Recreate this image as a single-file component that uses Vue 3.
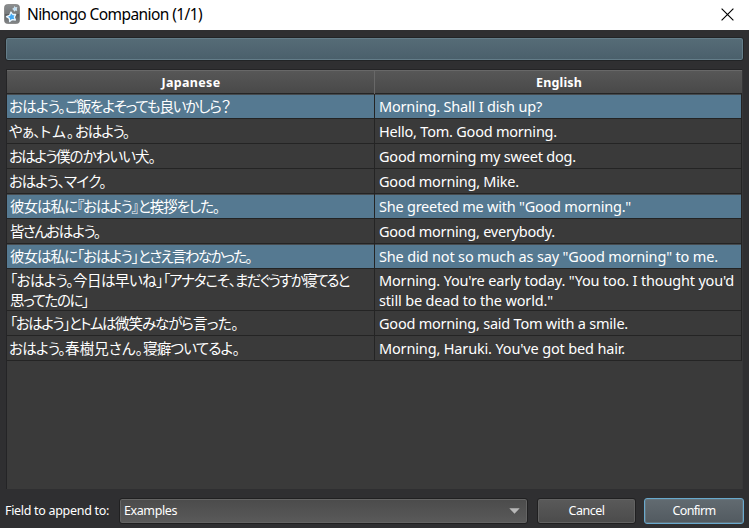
<script setup>
// Each line is a list of phrases with their widths.
const rows = [
  {
    picked: true,
    ja: [[['おはよう。', 56], ['ご飯をよそっても良いかしら？', 165]]],
    en: [['Morning. Shall I dish up?', 163]],
  },
  {
    ja: [[['やぁ、', 31], ['トム。', 35], ['おはよう。', 54]]],
    en: [['Hello, Tom. Good morning.', 178]],
  },
  {
    ja: [[['おはよう', 47], ['僕のかわいい犬。', 99]]],
    en: [['Good morning my sweet dog.', 197]],
  },
  {
    ja: [[['おはよう、', 55], ['マイク。', 42]]],
    en: [['Good morning, Mike.', 140]],
  },
  {
    picked: true,
    shift: true,
    ja: [[['彼女は私に', 67], ['『おはよう』', 61], ['と挨拶をした。', 81]]],
    en: [['She greeted me with "Good morning."', 252]],
  },
  {
    shift: true,
    ja: [[['皆さん', 36], ['おはよう。', 54]]],
    en: [['Good morning, everybody.', 176]],
  },
  {
    picked: true,
    shift: true,
    ja: [[['彼女は私に', 67], ['「おはよう」', 61], ['とさえ言わなかった。', 113]]],
    en: [['She did not so much as say "Good morning" to me.', 339]],
  },
  {
    tall: true,
    shift: true,
    ja: [
      [['「おはよう。', 63], ['今日は早いね」', 90], ['「アナタこそ、', 72], ['まだぐうすか', 68], ['寝てると', 45]],
      [['思ってたのに」', 78]],
    ],
    en: [['Morning. You\'re early today. "You too. I thought you\'d', 355], ['still be dead to the world."', 174]],
  },
  {
    shift: true,
    ja: [[['「おはよう」', 59], ['とトムは', 46], ['微笑みながら', 78], ['言った。', 45]]],
    en: [['Good morning, said Tom with a smile.', 249]],
  },
  {
    ja: [[['おはよう。', 56], ['春樹兄さん。', 78], ['寝癖ついてるよ。', 96]]],
    en: [["Morning, Haruki. You've got bed hair.", 246]],
  },
]

// Spreads the letters of a phrase so that it takes the given width.
const vFit = {
  mounted(el, { value }) {
    const n = [...el.textContent].length
    el.style.letterSpacing = (value - el.getBoundingClientRect().width) / n + 'px'
  },
}
</script>

<template>
  <div class="window">
    <header class="titlebar">
      <svg class="logo" width="16" height="20" viewBox="0 0 16 20">
        <defs>
          <linearGradient id="plate" x1="0" y1="0" x2="0" y2="1">
            <stop offset="0" stop-color="#8b8e90" />
            <stop offset=".48" stop-color="#777a7c" />
            <stop offset=".52" stop-color="#5b5e60" />
            <stop offset="1" stop-color="#85888a" />
          </linearGradient>
        </defs>
        <rect x=".5" y=".5" width="15" height="19" rx="3" fill="url(#plate)" stroke="#777" stroke-opacity=".7" />
        <path d="M7 8l1.7 2.5 3-.1-1.4 2.7 1.1 2.9-3.2-.4-2.5 2-.4-3.2L2.5 12.600l3.100-1.200z" fill="#43a9f4" stroke="#e9f6ff" stroke-width="1.300" stroke-linejoin="round" />
        <path d="M10.600 2.600l.9 1.100 1.500-.2-.7 1.500.6 1.400-1.500-.2-1.200 1-.3-1.500-1.300-.8 1.500-.7z" fill="#b9e2fb" stroke="#e9f6ff" stroke-width=".6" stroke-linejoin="round" />
      </svg>
      <span v-fit="175" class="title">Nihongo Companion (1/1)</span>
      <svg class="close" width="13" height="13" viewBox="0 0 13 13">
        <path d="M.6.6l11.8 11.8M12.4.6L.6 12.4" stroke="#000" stroke-width="1.15" fill="none" />
      </svg>
    </header>

    <main class="body">
      <input class="search" type="text" />
      <div class="table">
        <div class="head">
          <div><span v-fit="59">Japanese</span></div>
          <div><span v-fit="46">English</span></div>
        </div>
        <div v-for="(row, i) in rows" :key="i" class="row" :class="{ picked: row.picked, tall: row.tall }">
          <div class="cell ja" :class="{ shift: row.shift }">
            <div v-for="(line, j) in row.ja" :key="j" class="line"><span v-for="([text, width], k) in line" :key="k" v-fit="width">{{ text }}</span></div>
          </div>
          <div class="cell en">
            <div v-for="[text, width] in row.en" :key="text" class="line"><span v-fit="width">{{ text }}</span></div>
          </div>
        </div>
      </div>
      <footer class="footer">
        <div class="label"><span v-fit="104">Field to append to:</span></div>
        <div class="combo">
          <span v-fit="53">Examples</span>
          <svg width="11" height="6" viewBox="0 0 11 6"><path d="M.3.2h10.4L5.5 5.8z" fill="#b8b8b8" /></svg>
        </div>
        <button class="btn cancel"><span v-fit="36">Cancel</span></button>
        <button class="btn confirm"><span v-fit="43">Confirm</span></button>
      </footer>
    </main>
  </div>
</template>

<style>
body { margin: 0; background: #2f2f31; }
</style>

<style scoped>
.window {
  width: 749px;
  height: 528px;
  overflow: hidden;
  display: flex;
  flex-direction: column;
  background: #2f2f31;
  color: #fff;
  font-family: "Noto Sans", "Noto Sans CJK JP", sans-serif;
  box-sizing: border-box;
}
.window * { box-sizing: border-box; }
span { white-space: pre; }
.titlebar {
  flex: none;
  height: 30px;
  padding: 0 15px 2px 4px;
  display: flex;
  align-items: center;
  background: #fff;
  color: #000;
}
.title { margin-left: 7px; font-size: 15.5px; line-height: 20px; }
.close { margin-left: auto; }
.body {
  flex: 1;
  min-height: 0;
  padding: 7px 5px 3px;
  display: flex;
  flex-direction: column;
}
.search {
  flex: none;
  height: 24px;
  margin: 0;
  padding: 0 4px;
  border: 1px solid #222426;
  border-radius: 3px;
  outline: none;
  color: #fff;
  background: linear-gradient(#566c77, #4a5f6b);
  box-shadow: inset 0 0 0 1px #647d89;
}
.table {
  flex: none;
  height: 420px;
  margin: 8px 0 0 1px;
  width: 737px;
  border: 1px solid #242426;
  border-right-color: #373739;
  border-bottom: 0;
  background: #3a3a3a;
}
.head {
  height: 24px;
  display: grid;
  grid-template-columns: 367px 1fr;
  background: linear-gradient(#575757, #494949);
  border-top: 1px solid #686868;
  border-bottom: 1px solid #252525;
  font-size: 12.5px;
  font-weight: 700;
  line-height: 24px;
  text-align: center;
}
.head div { padding-left: 1px; }
.head div + div { border-left: 1px solid #686868; }
.row {
  height: 25px;
  width: 735px;
  display: grid;
  grid-template-columns: 368px 367px;
}
.tall { height: 42px; }
.cell {
  padding: 2px 0 0 4px;
  border-right: 1px solid #242424;
  border-bottom: 1px solid #242424;
  font-size: 14.5px;
}
.picked .cell {
  background: #557991;
  box-shadow: inset 0 1px #464a4d;
}
.line { height: 20px; line-height: 20px; }
.tall .cell { padding-top: 1px; }
.cell.ja {
  padding-left: 2px;
  font-family: "Noto Sans CJK JP", sans-serif;
  font-weight: 400;
  font-feature-settings: "palt";
}
.cell.ja.shift { padding-left: 3px; }
.footer {
  flex: none;
  display: flex;
  height: 26px;
  margin-top: 9px;
  align-items: stretch;
  font-size: 12.5px;
  line-height: 26px;
}
.label { width: 114px; }
.combo {
  width: 409px;
  height: 26px;
  padding: 0 7px 0 4px;
  display: flex;
  align-items: center;
  justify-content: space-between;
  border: 1px solid #202021;
  border-radius: 3px;
  background: linear-gradient(#4b4b4b, #5a5a5a);
  box-shadow: inset 0 0 0 1px #646464;
}
.btn {
  height: 26px;
  padding: 0;
  border: 1px solid #202021;
  border-radius: 3px;
  background: linear-gradient(#5a5a5a, #4b4b4b);
  box-shadow: inset 0 0 0 1px #626262;
  color: #fff;
  font: inherit;
  line-height: 24px;
}
.cancel { width: 99px; margin-left: 9px; }
.confirm {
  width: 100px;
  margin-left: 8px;
  border-color: #69a9cd;
  background: linear-gradient(#626b71, #525a60);
  box-shadow: inset 0 0 0 1px #64747e;
}
</style>
